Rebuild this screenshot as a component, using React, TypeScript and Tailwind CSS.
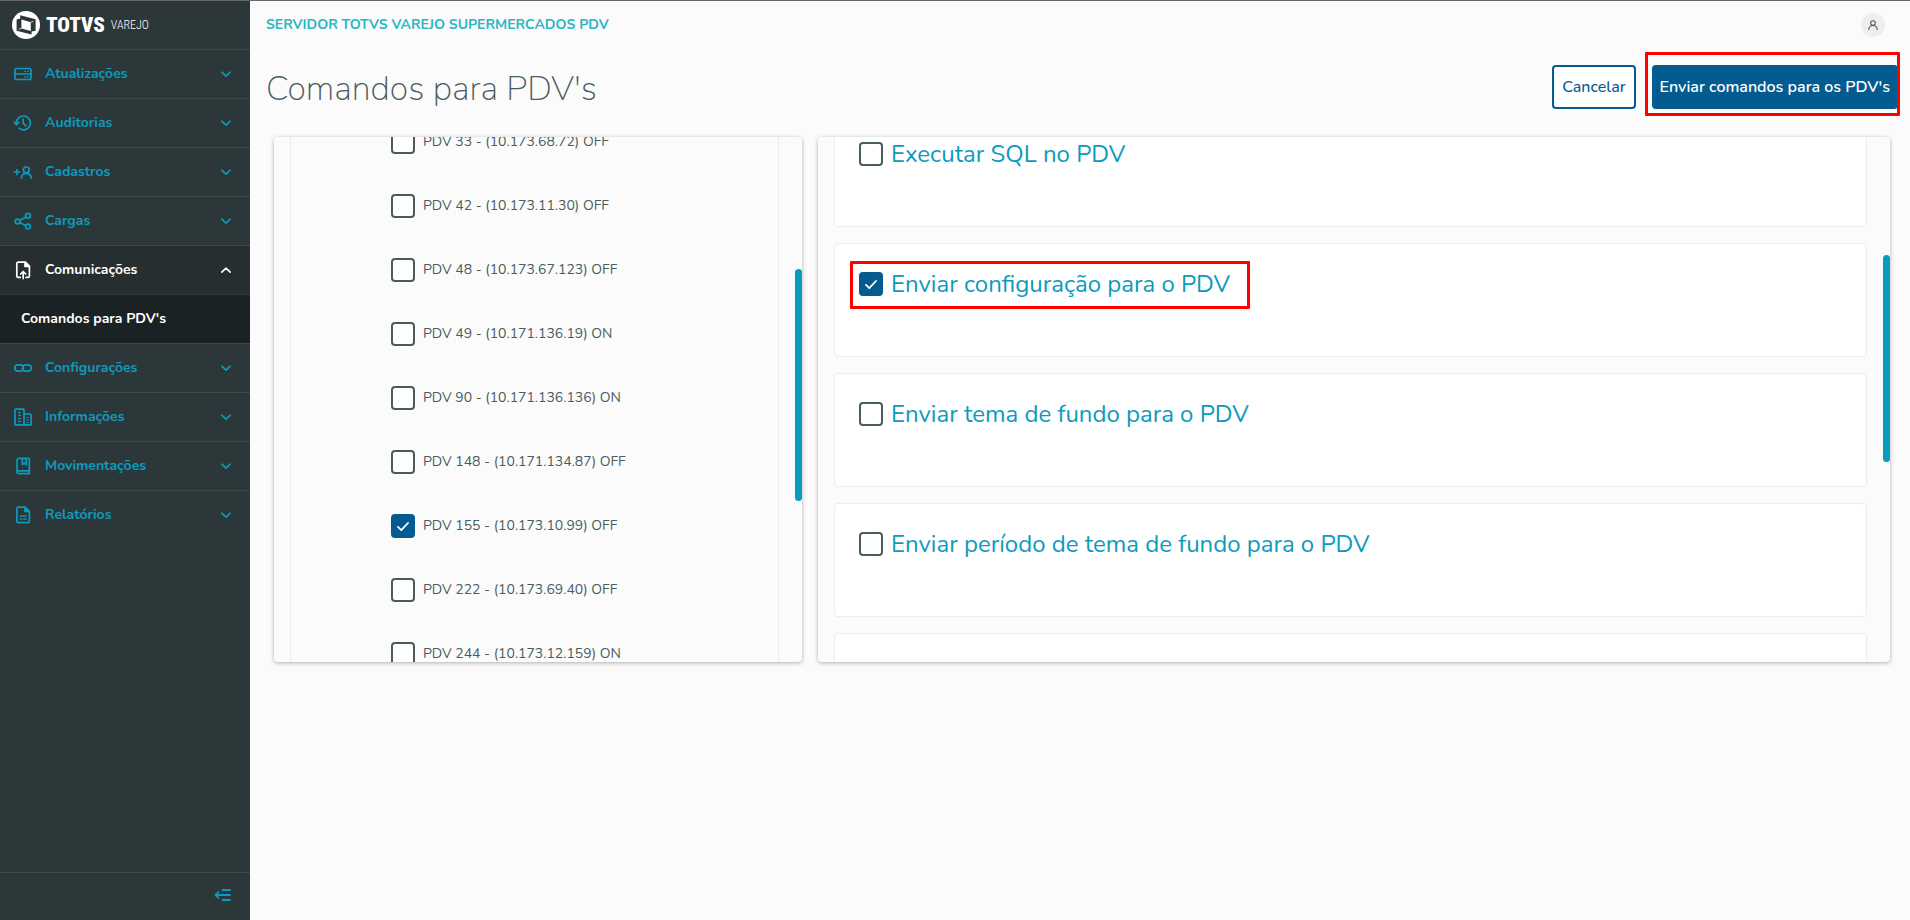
import { useState, type ReactNode } from 'react';

function Icon({ children }: { children: ReactNode }) {
  return (
    <svg
      viewBox="0 0 20 20"
      className="size-5 shrink-0"
      fill="none"
      stroke="currentColor"
      strokeWidth="1.7"
      strokeLinecap="round"
      strokeLinejoin="round"
      aria-hidden="true"
    >
      {children}
    </svg>
  );
}

const serverIcon = (
  <Icon>
    <rect x="2" y="4.5" width="16" height="11" rx="1.8" />
    <path d="M2 10h16M12 7.3h.1M14.8 7.3h.1M12 12.8h.1M14.8 12.8h.1" />
  </Icon>
);
const historyIcon = (
  <Icon>
    <path d="M3.7 11.5A6.9 6.9 0 1 1 6 15.2M1.2 9.2l2.4 2.6 2.3-2.6M10.2 6v4.2l2.6 2.6" />
  </Icon>
);
const userAddIcon = (
  <Icon>
    <path d="M1.4 10h5M3.9 7.5v5M8.4 16.2c.2-3 1.9-4.8 4.8-4.8s4.9 1.8 5.2 4.8" />
    <circle cx="13.3" cy="7.9" r="2.9" />
  </Icon>
);
const shareIcon = (
  <Icon>
    <circle cx="4.6" cy="10.5" r="2.4" />
    <circle cx="15" cy="4.8" r="2.4" />
    <circle cx="15" cy="15.6" r="2.4" />
    <path d="M6.8 9.4l6-3.4M6.8 11.7l5.9 2.8" />
  </Icon>
);
const uploadIcon = (
  <Icon>
    <path d="M7.3 17.3H5.2a1.4 1.4 0 0 1-1.4-1.4V3.6a1.4 1.4 0 0 1 1.4-1.4h7.2l4 4v9.7a1.4 1.4 0 0 1-1.4 1.4h-2M10.2 18.6v-6.5M7.7 14l2.5-2.5 2.5 2.5" />
    <path d="M12 2.4v4.1h4.2z" fill="currentColor" />
  </Icon>
);
const linkIcon = (
  <Icon>
    <path d="M9.3 12.4c-.6.5-1.3.8-2.1.8H5a3.2 3.2 0 0 1 0-6.4h2.2c1.9 0 3.3 1.5 3.3 3.2M10.7 7.6c.6-.5 1.3-.8 2.1-.8H15a3.2 3.2 0 0 1 0 6.4h-2.2c-1.9 0-3.3-1.5-3.3-3.2" />
  </Icon>
);
const buildingIcon = (
  <Icon>
    <path d="M2 17.8V2.9a.8.8 0 0 1 .8-.8h7.4a.8.8 0 0 1 .8.8v14.9zM11 7h6.2a.8.8 0 0 1 .8.8v10h-7" />
    <path d="M5.7 5.5h1.6M5.7 8.5h1.6M5.7 11.5h1.6M5.7 14.5h1.6M14.2 10.4h.8M14.2 12.8h.8M14.2 15.2h.8" strokeWidth="1.3" />
  </Icon>
);
const bookIcon = (
  <Icon>
    <path d="M4 16V4.4a2 2 0 0 1 2-2h9.3a1 1 0 0 1 1 1v14.2H5.6A1.6 1.6 0 0 1 4 16zM4.2 14.8h12M9.3 2.4v6.2l1.9-1.5 1.9 1.5V2.4" />
  </Icon>
);
const reportIcon = (
  <Icon>
    <path d="M12.2 2.2H5.3a1.4 1.4 0 0 0-1.4 1.4v12.7a1.4 1.4 0 0 0 1.4 1.4h9.7a1.4 1.4 0 0 0 1.4-1.4V6.3z" />
    <path d="M7.3 11h5.8M7.3 14h1M10.5 14h2.6" strokeWidth="1.4" />
    <path d="M12 2.5v3.9h4z" fill="currentColor" />
  </Icon>
);

function Chevron({ open }: { open: boolean }) {
  return (
    <svg viewBox="0 0 12 12" className="ml-auto size-3" fill="none" stroke="currentColor" strokeWidth="1.6" strokeLinecap="round" strokeLinejoin="round" aria-hidden="true">
      <path d={open ? 'M1.8 8.2L6 4.2l4.2 4' : 'M1.8 4.2L6 8.2l4.2-4'} />
    </svg>
  );
}

const menu: { label: string; icon: ReactNode; items?: string[] }[] = [
  { label: 'Atualizações', icon: serverIcon },
  { label: 'Auditorias', icon: historyIcon },
  { label: 'Cadastros', icon: userAddIcon },
  { label: 'Cargas', icon: shareIcon },
  { label: 'Comunicações', icon: uploadIcon, items: ["Comandos para PDV's"] },
  { label: 'Configurações', icon: linkIcon },
  { label: 'Informações', icon: buildingIcon },
  { label: 'Movimentações', icon: bookIcon },
  { label: 'Relatórios', icon: reportIcon },
];

function Sidebar() {
  return (
    <aside className="flex w-[250px] shrink-0 flex-col bg-[#2c3739] text-sm font-bold text-[#0c9abe]">
      <div className="flex h-12 items-center gap-1.5 pl-3 text-white">
        <svg viewBox="0 0 28 28" className="size-7" aria-hidden="true">
          <circle cx="14" cy="14" r="14" fill="#fff" />
          <path d="M8.2 4.3L23.6 8.2v11.6l-4 .8v3L4.6 19.8V8.4l3.6-.8z" fill="#2c3739" />
          <path d="M9.4 8.6l9.4 2.6v8.8l-9.4-2.6z" fill="#fff" />
          <path d="M18.8 11.2l2.6-.8M9.4 17.4l-2.6.8" stroke="#fff" strokeWidth="0.8" />
        </svg>
        <span className="font-['Roboto_Condensed','Roboto',sans-serif] text-[21px] leading-none font-black">TOTVS</span>
        <span className="font-['Roboto_Condensed','Roboto',sans-serif] text-xs leading-none font-light">VAREJO</span>
      </div>
      <nav className="flex flex-col">
        {menu.map(({ label, icon, items }) => (
          <div key={label} className="flex flex-col">
            <button
              type="button"
              aria-expanded={!!items}
              className={`flex h-[49px] items-center gap-3 border-t border-[#3c4a4d] pr-[18px] pl-[13px] ${items ? 'bg-[#262e30] text-white' : ''}`}
            >
              {icon}
              {label}
              <Chevron open={!!items} />
            </button>
            {items?.map((item) => (
              <a key={item} href="#comandos" className="flex h-[49px] items-center border-t border-[#303c3e] bg-[#1b2224] pl-[21px] text-white">
                {item}
              </a>
            ))}
          </div>
        ))}
      </nav>
      <div className="mt-auto flex h-12 items-center justify-end border-t border-[#3c4a4d] pr-[19px] pb-1">
        <button type="button" aria-label="Recolher menu" className="flex">
          <svg viewBox="0 0 18 18" className="size-[18px]" fill="none" stroke="currentColor" strokeWidth="1.8" strokeLinecap="round" strokeLinejoin="round" aria-hidden="true">
            <path d="M9.5 4H17M3 9h14M9.5 14H17M5.4 6.2L2.4 9l3 2.8" />
          </svg>
        </button>
      </div>
    </aside>
  );
}

function Check({ id, checked, onChange }: { id: string; checked: boolean; onChange: () => void }) {
  return (
    <span className="grid size-6 shrink-0 place-items-center">
      <input
        id={id}
        type="checkbox"
        checked={checked}
        onChange={onChange}
        className="col-start-1 row-start-1 size-6 appearance-none rounded-[4px] border-2 border-[#4a5c60] bg-white checked:border-[#045b8f] checked:bg-[#045b8f]"
      />
      {checked && (
        <svg viewBox="0 0 12 12" className="pointer-events-none col-start-1 row-start-1 size-3" fill="none" stroke="#fff" strokeWidth="1.8" strokeLinecap="round" strokeLinejoin="round" aria-hidden="true">
          <path d="M1 6.9l3.3 3.2L11 3" />
        </svg>
      )}
    </span>
  );
}

const pdvs = [
  'PDV 33 - (10.173.68.72) OFF',
  'PDV 42 - (10.173.11.30) OFF',
  'PDV 48 - (10.173.67.123) OFF',
  'PDV 49 - (10.171.136.19) ON',
  'PDV 90 - (10.171.136.136) ON',
  'PDV 148 - (10.171.134.87) OFF',
  'PDV 155 - (10.173.10.99) OFF',
  'PDV 222 - (10.173.69.40) OFF',
  'PDV 244 - (10.173.12.159) ON',
];

const commands = [
  'Executar SQL no PDV',
  'Enviar configuração para o PDV',
  'Enviar tema de fundo para o PDV',
  'Enviar período de tema de fundo para o PDV',
  '',
];

const panel = 'relative h-[525px] overflow-hidden rounded-[4px] bg-[#fbfbfb] pr-[23px] pl-4 shadow-[0_1px_4px_rgba(0,0,0,0.3)]';

export default function App() {
  const [selected, setSelected] = useState<string[]>([pdvs[6], commands[1]]);
  const toggle = (name: string) =>
    setSelected((list) => (list.includes(name) ? list.filter((n) => n !== name) : [...list, name]));

  return (
    <div className="flex min-h-screen border-t border-[#666] bg-[#fbfbfb] font-['Nunito','Nunito_Sans','Lato',sans-serif]">
      <Sidebar />
      <main className="flex min-w-0 flex-1 flex-col pr-3 pl-4">
        <header className="flex h-12 items-center justify-between pr-[13px]">
          <span className="text-sm font-bold text-[#29b6c5]">SERVIDOR TOTVS VAREJO SUPERMERCADOS PDV</span>
          <button type="button" aria-label="Perfil" className="flex size-6 items-center justify-center rounded-full bg-[#eee] text-[#4a5c60]">
            <svg viewBox="0 0 12 12" className="size-3" fill="none" stroke="currentColor" strokeWidth="1.1" strokeLinecap="round" aria-hidden="true">
              <circle cx="6" cy="4" r="2.3" />
              <path d="M1.8 10.5C2 8 3.6 6.5 6 6.5S10 8 10.2 10.5" />
            </svg>
          </button>
        </header>

        <div className="flex h-[88px] items-start justify-between pt-4">
          <h1 className="text-[34px] leading-[48px] font-extralight text-[#4a5c60]">Comandos para PDV's</h1>
          <div className="flex gap-4">
            <button type="button" className="h-11 rounded-[4px] border-2 border-[#045b8f] bg-white px-2 font-medium text-[#045b8f]">
              Cancelar
            </button>
            <div className="relative">
              <button type="button" className="h-11 rounded-[4px] bg-[#045b8f] px-2 font-semibold text-white">
                Enviar comandos para os PDV's
              </button>
              <span className="pointer-events-none absolute -top-[13px] -right-0.5 -left-[7px] h-16 rounded-[1px] border-3 border-[#f00]" />
            </div>
          </div>
        </div>

        <div className="grid grid-cols-3">
          <div className="px-2">
            <section className={panel} aria-label="PDVs">
              <ul className="-mt-[27px] border-x border-[#ececec] pl-[100px]">
                {pdvs.map((name) => (
                  <li key={name} className="flex h-16 items-center gap-2">
                    <Check id={name} checked={selected.includes(name)} onChange={() => toggle(name)} />
                    <label htmlFor={name} className="text-sm text-[#4a5c60]">{name}</label>
                  </li>
                ))}
              </ul>
              <div className="absolute top-[132px] right-0 h-[232px] w-[7px] rounded-full bg-[#0c9abe]" />
            </section>
          </div>
          <div className="col-span-2 px-2">
            <section className={panel} aria-label="Comandos">
              <ul className="-mt-6 flex flex-col gap-4">
                {commands.map((name) => (
                  <li key={name} className="flex h-[114px] items-start rounded-[4px] border border-[#ececec] bg-white px-6 pt-7">
                    {name && (
                      <div className="relative flex h-6 items-center gap-2">
                        <Check id={name} checked={selected.includes(name)} onChange={() => toggle(name)} />
                        <label htmlFor={name} className="text-2xl text-[#0c9abe]">{name}</label>
                        {name === commands[1] && (
                          <span className="pointer-events-none absolute -top-[11px] -right-5 -left-[9px] h-12 rounded-[1px] border-3 border-[#f00]" />
                        )}
                      </div>
                    )}
                  </li>
                ))}
              </ul>
              <div className="absolute top-[118px] right-0 h-[207px] w-[7px] rounded-full bg-[#0c9abe]" />
            </section>
          </div>
        </div>
      </main>
    </div>
  );
}
